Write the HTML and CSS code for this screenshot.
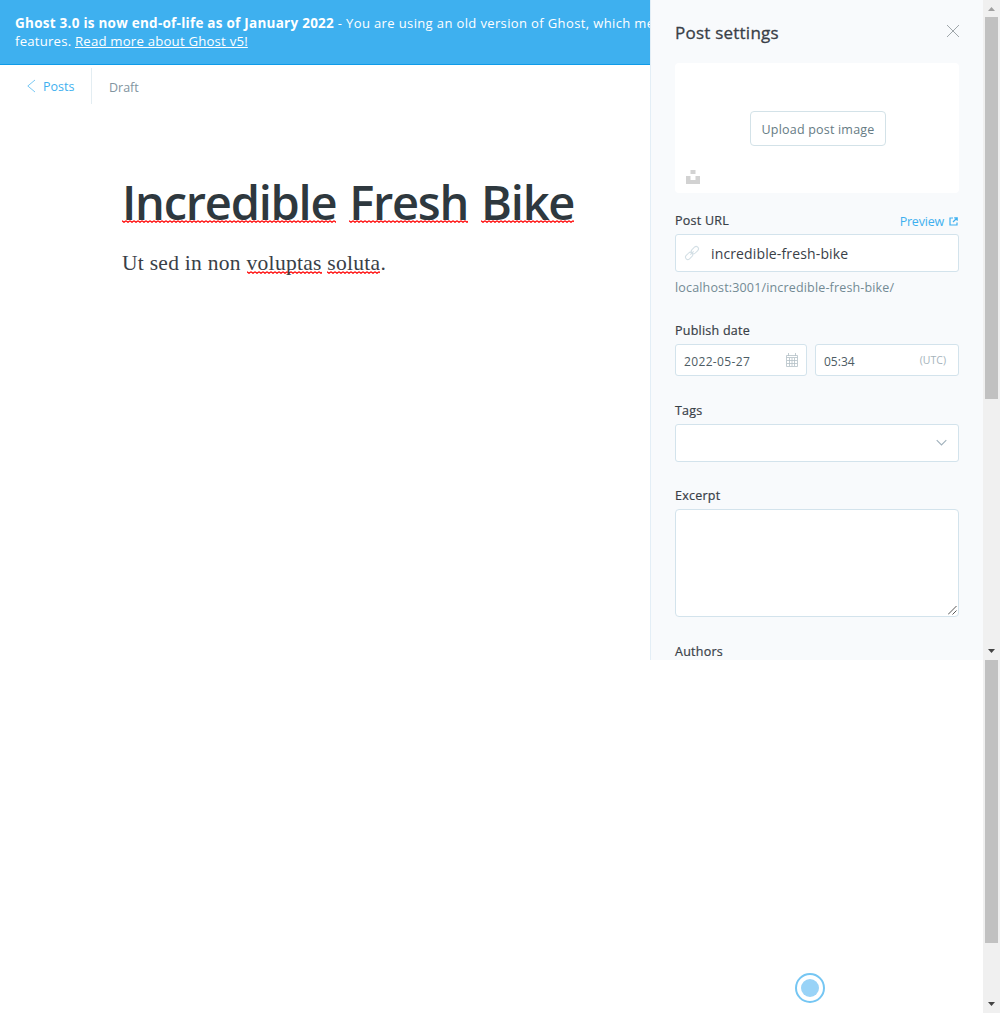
FILE: index.html
```html
<!DOCTYPE html>
<html lang="en">
<head>
<meta charset="utf-8">
<title>Post editor - Ghost</title>
<link rel="stylesheet" href="styles.css">
</head>
<body>
<div class="app">
  <main class="editor">
    <div class="banner">
      <div class="banner-line"><strong>Ghost 3.0 is now end-of-life as of January 2022</strong><span class="banner-text"> - You are using an old version of Ghost, which me</span></div>
      <div class="banner-line"><span class="banner-rest">features. <a href="#">Read more about Ghost v5!</a></span></div>
    </div>
    <header class="toolbar">
      <a class="back" href="#"><svg width="9" height="14" viewBox="0 0 9 14"><path d="M8 1 .8 7 8 13"/></svg><span class="back-label">Posts</span></a>
      <span class="status">Draft</span>
    </header>
    <article class="post">
      <h1 class="title"><span class="spell">Incredible</span> <span class="spell">Fresh</span> <span class="spell">Bike</span></h1>
      <p class="body-text">Ut sed in non <span class="spell">voluptas</span> <span class="spell">soluta</span>.</p>
    </article>
  </main>

  <aside class="settings">
    <div class="settings-head">
      <h4 class="settings-title">Post settings</h4>
      <svg class="close" width="14" height="14" viewBox="0 0 14 14"><path d="M1 1l12 12M13 1 1 13"/></svg>
    </div>
    <div class="uploader">
      <button class="upload-button"><span>Upload post image</span></button>
      <svg class="unsplash" width="14" height="14" viewBox="0 0 14 14"><path d="M4.5 0h5v4h-5zM0 6h4.5v4h5V6H14v8H0z"/></svg>
    </div>
    <section class="group url-group">
      <div class="label-row">
        <label class="label">Post URL</label>
        <a class="preview" href="#"><span>Preview</span><svg width="9" height="9" viewBox="0 0 9 9"><path d="M4 1H1v7h7V5.500M5.200.8h3v3M8 1 4 5"/></svg></a>
      </div>
      <div class="field url-field">
        <svg class="link-icon" width="14" height="14" viewBox="0 0 24 24"><g transform="rotate(-45 12 12)"><rect x="-2" y="8" width="14" height="8" rx="4"/><rect x="12" y="8" width="14" height="8" rx="4"/><path d="M8 12h8"/></g></svg>
        <span class="url-value">incredible-fresh-bike</span>
      </div>
      <p class="hint">localhost:3001/incredible-fresh-bike/</p>
    </section>
    <section class="group date-group">
      <label class="label">Publish date</label>
      <div class="date-row">
        <div class="field date-field"><span class="date-value">2022-05-27</span>
          <svg width="12" height="14" viewBox="0 0 12 14"><path d="M.5 2.500h11v11H.5zM.5 4.500h11M1 7.500h10M1 10.500h10M3.500 5v8M6 5v8M8.500 5v8M2.500 0v3M9.500 0v3"/></svg></div>
        <div class="field time-field"><span class="time-value">05:34</span><span class="zone">(UTC)</span></div>
      </div>
    </section>
    <section class="group tags-group">
      <label class="label">Tags</label>
      <div class="field tags-field"><svg width="11" height="8" viewBox="0 0 11 8"><path d="M.7 1.200 5.500 6l4.800-4.800"/></svg></div>
    </section>
    <section class="group excerpt-group">
      <label class="label">Excerpt</label>
      <div class="field excerpt-field"><svg width="9" height="9" viewBox="0 0 9 9"><path d="M0 8.500 8.500 0M4.500 8.500l4-4"/></svg></div>
    </section>
    <section class="group"><label class="label">Authors</label></section>
  </aside>

  <div class="scrollbar panel-scroll">
    <svg width="17" height="17" viewBox="0 0 17 17"><path class="dim" d="M5 11h7L8.500 7z"/></svg>
    <div class="thumb"></div>
    <svg width="17" height="17" viewBox="0 0 17 17"><path d="M5 6h7L8.500 10z"/></svg>
  </div>
  <div class="scrollbar page-scroll">
    <div class="thumb"></div>
    <svg width="17" height="17" viewBox="0 0 17 17"><path d="M5 6h7L8.500 10z"/></svg>
  </div>
  <div class="beacon"></div>
</div>
</body>
</html>
```
FILE: styles.css
```css
* { box-sizing: border-box; }
body { margin: 0; background: #fff; font-family: "Open Sans", "Noto Sans", sans-serif; color: #394047; }
svg { display: block; flex: none; fill: none; }
a { text-decoration: none; color: #3eb0ef; }
h1, h4, p { margin: 0; }

.app { position: relative; display: grid; grid-template-columns: 650px 333px 17px; grid-template-rows: 660px 353px; width: 1000px; height: 1013px; overflow: hidden; }
.editor { grid-row: 1 / 3; overflow: hidden; }

.banner { height: 65px; padding: 14px 0 0 15px; background: #3eb0ef; border-bottom: 1px solid #0f9be8; color: #fff; overflow: hidden; }
.banner-line { height: 18px; line-height: 18px; font-size: 13px; white-space: pre; letter-spacing: .37px; }
.banner strong { font-size: 13.500px; letter-spacing: .25px; }
.banner-rest { font-size: 13.200px; letter-spacing: .2px; }
.banner a { color: #fff; text-decoration: underline; }

.toolbar { display: flex; align-items: center; height: 42px; padding: 0 0 0 27px; font-size: 12.500px; }
.back { display: flex; align-items: center; gap: 7px; width: 65px; height: 36px; border-right: 1px solid #e3edf2; }
.back svg { stroke: #3eb0ef; stroke-width: .7; }
.status { padding-left: 17px; padding-top: 2px; color: #8294a0; }

.post { padding: 63px 0 0 122px; white-space: nowrap; }
.title { height: 64px; line-height: 64px; font-size: 47px; font-weight: 600; color: #2e383e; letter-spacing: -1.250px; word-spacing: 2px; }
.spell { display: inline-block; background: url("data:image/svg+xml,%3Csvg xmlns='http://www.w3.org/2000/svg' width='4' height='3'%3E%3Cpath d='M0 .7 2 2.300 4 .7' fill='none' stroke='red' stroke-width='1.200'/%3E%3C/svg%3E") repeat-x 0 100%; }
.title .spell { background-position: 0 50px; }
.body-text { margin-top: 13px; height: 32px; line-height: 32px; font-family: "Liberation Serif", serif; font-size: 21.500px; letter-spacing: .28px; color: #394047; }
.body-text .spell { background-position: 0 24px; }

.settings { overflow: hidden; padding: 0 24px; background: #f8fafc; border-left: 1px solid #e3eef6; }
.settings-head { display: flex; justify-content: space-between; height: 63px; padding-top: 21px; }
.settings-title { font-size: 17px; line-height: 24px; font-weight: 400; letter-spacing: .23px; -webkit-text-stroke: .3px; white-space: nowrap; }
.close { margin: 3px -1px 0 0; stroke: #8f969b; stroke-width: .85; }
.uploader { display: flex; flex-direction: column; align-items: center; height: 130px; padding-top: 48px; background: #fff; border-radius: 4px; }
.upload-button { width: 136px; height: 35px; margin-left: 2px; padding: 2px 0 0; font: 12.500px/31px "Open Sans", sans-serif; letter-spacing: .2px; color: #667b84; background: #fff; border: 1px solid #d3e2e8; border-radius: 4px; white-space: nowrap; }
.unsplash { align-self: flex-start; margin: 24px 0 0 11px; fill: #d2d2d2; }

.label { display: block; height: 20px; line-height: 22px; font-size: 12.500px; letter-spacing: .24px; -webkit-text-stroke: .2px; white-space: nowrap; }
.label-row { display: flex; justify-content: space-between; }
.field { display: flex; align-items: center; background: #fff; border: 1px solid #d3e3ec; border-radius: 3px; white-space: nowrap; }
.url-group { height: 110px; padding-top: 17px; }
.preview { display: flex; align-items: center; gap: 5px; height: 22px; font-size: 12.500px; letter-spacing: -.2px; }
.preview svg { stroke: #3eb0ef; stroke-width: 1.200; margin-right: 1px; }
.url-field { height: 38px; margin-top: 2px; padding-left: 9px; gap: 12px; font-size: 14px; letter-spacing: .14px; }
.link-icon { stroke: #d3dfe5; stroke-width: 1.800; overflow: visible; }
.hint { margin-top: 5px; height: 20px; line-height: 22px; font-size: 12.500px; letter-spacing: .16px; color: #738a94; white-space: nowrap; }
.date-group { height: 80px; padding-top: 17px; }
.date-row { display: grid; grid-template-columns: 132px 144px; gap: 8px; margin-top: 4px; }
.date-field, .time-field { height: 32px; justify-content: space-between; padding: 0 8px; font-size: 12px; color: #4d5c64; }
.date-value, .time-value { padding-top: 2px; }
.date-value { letter-spacing: .35px; }
.date-field svg { stroke: #b4c0c6; stroke-width: .8; }
.time-field { padding-right: 12px; }
.zone { font-size: 10.500px; color: #a5b3bb; }
.tags-group { height: 85px; padding-top: 17px; }
.tags-field { height: 38px; margin-top: 4px; justify-content: flex-end; padding-right: 11px; }
.tags-field svg { stroke: #a0b1bc; stroke-width: 1.100; margin-top: -1px; }
.excerpt-group { height: 156px; padding-top: 17px; }
.excerpt-field { height: 108px; margin-top: 4px; align-items: flex-end; justify-content: flex-end; padding: 0 1px 1px 0; border-radius: 4px; }
.excerpt-field svg { stroke: #444; stroke-width: .9; }
.group:last-child { padding-top: 17px; }

.scrollbar { display: flex; flex-direction: column; background: #f0f0f0; }
.scrollbar path { fill: #444; }
.scrollbar .dim { fill: #a0a0a0; }
.thumb { width: 13px; margin-left: 2px; margin-bottom: auto; background: #c1c1c1; }
.panel-scroll { grid-column: 3; grid-row: 1; }
.panel-scroll .thumb { height: 382px; }
.page-scroll { grid-column: 3; grid-row: 2; }
.page-scroll .thumb { height: 283px; }

.beacon { position: absolute; left: 795px; top: 973px; width: 30px; height: 30px; border: 2px solid #75c6f3; border-radius: 50%; padding: 4px; background: #99d3f7 content-box; }
```
